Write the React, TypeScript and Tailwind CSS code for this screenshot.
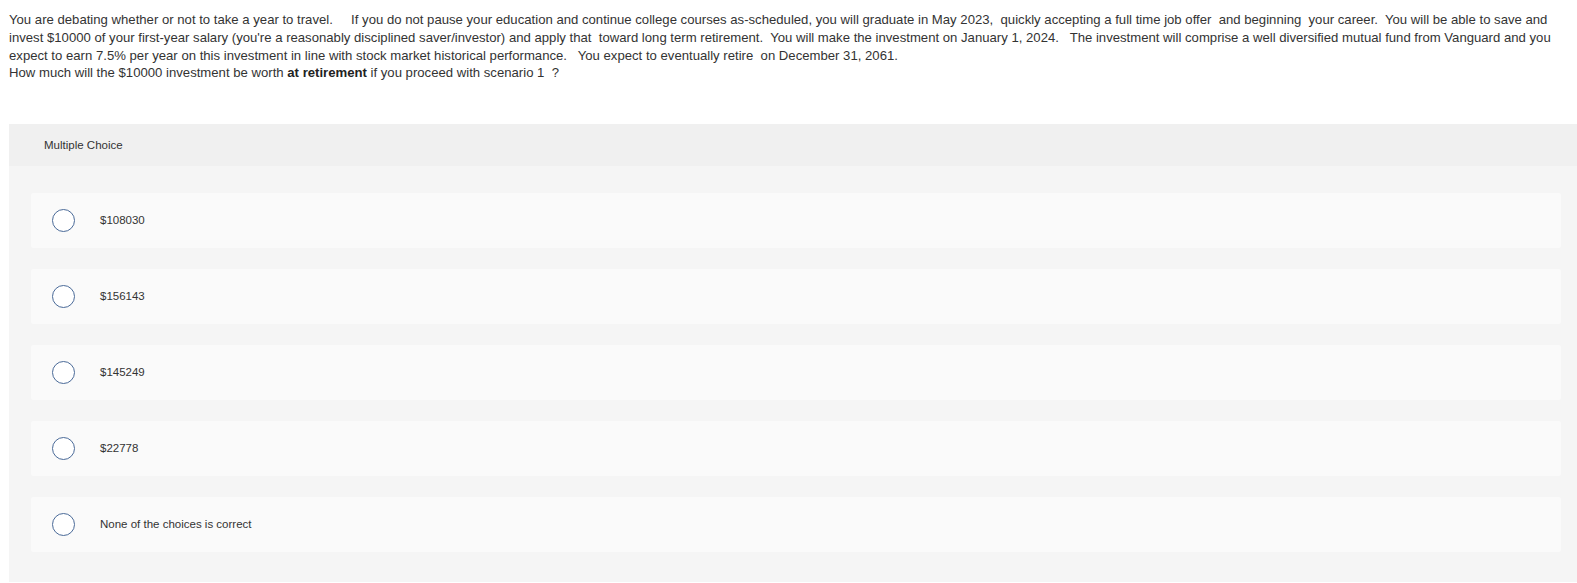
const choices = ["$108030", "$156143", "$145249", "$22778", "None of the choices is correct"];

function Radio() {
    return (
        <span className="block w-[23px] h-[23px] rounded-full border-[1.5px] border-[#4a6a98] bg-white shrink-0"></span>
    );
}

export default function App() {
    const font = { fontFamily: '"Liberation Sans", Arial, sans-serif' };
    return (
        <div className="w-[1577px] h-[583px] bg-white overflow-hidden text-[#333]" style={font}>
            {/* question text */}
            <div className="pl-[9px] pt-[11px] text-[13.15px] leading-[17.8px] whitespace-pre">
                <div>You are debating whether or not to take a year to travel.     If you do not pause your education and continue college courses as-scheduled, you will graduate in May 2023,  quickly accepting a full time job offer  and beginning  your career.  You will be able to save and</div>
                <div>invest $10000 of your first-year salary (you're a reasonably disciplined saver/investor) and apply that  toward long term retirement.  You will make the investment on January 1, 2024.   The investment will comprise a well diversified mutual fund from Vanguard and you</div>
                <div>expect to earn 7.5% per year on this investment in line with stock market historical performance.   You expect to eventually retire  on December 31, 2061.</div>
                <div>How much will the $10000 investment be worth <b className="font-bold text-[#222]">at retirement</b> if you proceed with scenario 1  ?</div>
            </div>

            {/* multiple choice box */}
            <div className="ml-[9px] mt-[42px]">
                <div className="h-[42px] bg-[#f0f0f0] flex items-center pl-[35px] text-[11.5px]">
                    Multiple Choice
                </div>
                <div className="bg-[#f5f5f5] pt-[27px] pl-[22px] pr-[16px] pb-[30px] flex flex-col gap-[21px]">
                    {choices.map((choice, index) => (
                        <div key={index} className="h-[55px] bg-[#fafafa] rounded-[2px] flex items-center pl-[21px]">
                            <Radio />
                            <span className="ml-[25px] text-[11.5px]">{choice}</span>
                        </div>
                    ))}
                </div>
            </div>
        </div>
    );
}
